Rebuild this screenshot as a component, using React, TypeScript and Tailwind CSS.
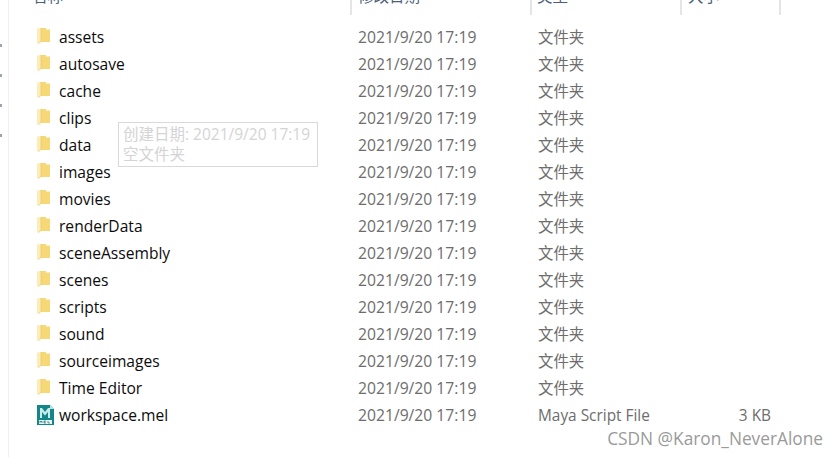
const folders = [
  "assets",
  "autosave",
  "cache",
  "clips",
  "data",
  "images",
  "movies",
  "renderData",
  "sceneAssembly",
  "scenes",
  "scripts",
  "sound",
  "sourceimages",
  "Time Editor",
];

const stamp = "2021/9/20 17:19";
const cjk = "font-['Open_Sans','Noto_Sans_CJK_SC',sans-serif]";

function FolderIcon() {
  return (
    <svg width="13" height="18" viewBox="0 0 13 18" className="-mt-[2px] shrink-0">
      <path d="M3 1h6v1.500h4V15H3z" fill="#f6d876" />
      <path d="M0 1.500L4 1v13.500L1 17 0 16z" fill="#fbecb8" />
      <path d="M4 1v13.500L1.500 16.500" fill="none" stroke="#ecca6e" strokeWidth="0.8" />
    </svg>
  );
}

function MelIcon() {
  return (
    <svg width="17" height="20" viewBox="0 0 17 20" className="shrink-0">
      <path d="M0 0h13l4 4v16H0z" fill="#14868a" />
      <path d="M13 0l4 4h-4z" fill="#bfe3e0" />
      <path d="M3 13V3h2l3 4 3-4h2v10h-2V7L8 10.500 5 7v6z" fill="#c9ecea" />
      <rect x="2" y="15" width="13" height="4" fill="#e5f2f1" />
      <path d="M3 18v-2M3 16l1 1 1-1v2M7 16v2M7 16h2M7 17h1.500M7 18h2M11 16v2h2" stroke="#0b6b6b" strokeWidth="0.6" fill="none" />
    </svg>
  );
}

function Row({ name, type, size, icon }: { name: string; type: string; size?: string; icon: React.ReactNode }) {
  return (
    <div className="flex h-[27px] items-center">
      <div className="flex w-[322px] items-center">
        <div className="flex w-[23px] justify-start pl-[1px]">{icon}</div>
        <span className="text-[15.6px] text-[#0c0c0c]">{name}</span>
      </div>
      <span className="w-[180px] text-[15.7px] text-[#6d6d6d]">{stamp}</span>
      <span className="w-[150px] text-[15.4px] text-[#6d6d6d]">{type}</span>
      {size && <span className="w-[83px] text-right text-[15.4px] text-[#6d6d6d]">{size}</span>}
    </div>
  );
}

export default function App() {
  return (
    <div className={`relative h-[457px] w-[838px] overflow-hidden bg-white ${cjk}`}>
      <div className="ml-[8px] h-full border-l border-[#f0f0f0] pl-[27px]">
        <div className="flex h-[15px] items-end text-[15.5px] leading-[20px] text-[#4c607a]">
          <div className="flex h-[15px] w-[314px] items-end">
            <span className="mb-[9px] -ml-[4px]">名称</span>
          </div>
          <div className="flex h-[15px] w-[180px] items-end border-l-2 border-[#e5e5e5] pl-[6px]">
            <span className="mb-[9px]">修改日期</span>
          </div>
          <div className="flex h-[15px] w-[150px] items-end border-l-2 border-[#e5e5e5] pl-[5px]">
            <span className="mb-[9px]">类型</span>
          </div>
          <div className="flex h-[15px] w-[101px] items-end border-r-2 border-l-2 border-[#e5e5e5] pl-[6px]">
            <span className="mb-[9px]">大小</span>
          </div>
        </div>
        <div className="pt-[9px]">
          {folders.map((f) => (
            <Row key={f} name={f} type="文件夹" icon={<FolderIcon />} />
          ))}
          <Row name="workspace.mel" type="Maya Script File" size="3 KB" icon={<MelIcon />} />
        </div>
      </div>

      {/* cropped scrollbar ticks at the window edge */}
      <div className="absolute left-0 top-[44px] h-[3px] w-[2px] bg-[#9aa5b1]" />
      <div className="absolute left-0 top-[74px] h-[3px] w-[2px] bg-[#9aa5b1]" />
      <div className="absolute left-0 top-[104px] h-[3px] w-[2px] bg-[#9aa5b1]" />
      <div className="absolute left-0 top-[134px] h-[3px] w-[2px] bg-[#9aa5b1]" />

      {/* tooltip over the list */}
      <div className="absolute left-[118px] top-[122px] h-[45px] w-[200px] border border-[#d9d9d9] bg-white px-[4px] pt-[1px] text-[15.5px] leading-[20px] text-[#d4d4d4]">
        <div>创建日期: {stamp}</div>
        <div>空文件夹</div>
      </div>

      <span className="absolute right-[15px] top-[427px] text-[17.3px] leading-[24px] text-[#9a9a9a]">
        CSDN @Karon_NeverAlone
      </span>
    </div>
  );
}
